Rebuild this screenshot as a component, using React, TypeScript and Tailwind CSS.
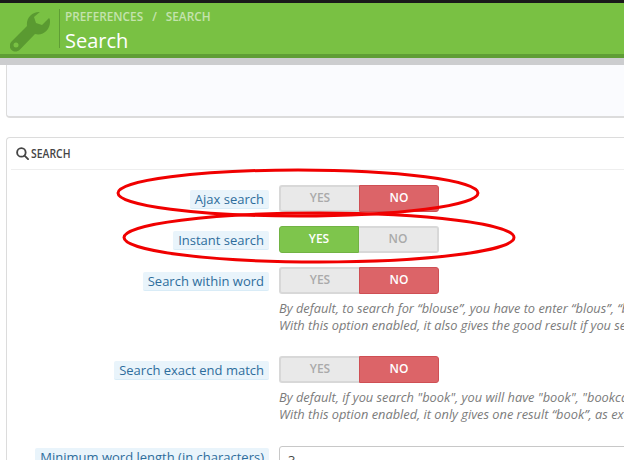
import type { ReactNode } from "react";

const font = { fontFamily: '"Open Sans", "Liberation Sans", sans-serif' };

function Toggle({ value }: { value: "yes" | "no" }) {
  const on = value === "yes";
  return (
    <div className="flex h-[27px] w-[160px] text-[12px] font-semibold">
      <div
        className={
          on
            ? "flex w-[80px] items-center justify-center rounded-l-[3px] border border-[#72b344] bg-[#7ec54c] pb-[2px] text-white"
            : "flex w-[80px] items-center justify-center rounded-l-[3px] border-y-2 border-l-2 border-[#d8d8d8] bg-[#e9e9e9] pb-[2px] text-[#aaaaaa]"
        }
      >
        YES
      </div>
      <div
        className={
          on
            ? "flex w-[80px] items-center justify-center rounded-r-[3px] border-y-2 border-r-2 border-[#d8d8d8] bg-[#e9e9e9] pb-[2px] text-[#aaaaaa]"
            : "flex w-[80px] items-center justify-center rounded-r-[3px] border border-[#cf4f54] bg-[#dc6468] pb-[2px] text-white"
        }
      >
        NO
      </div>
    </div>
  );
}

function Label({ children }: { children: ReactNode }) {
  return (
    <div className="mt-[2px] flex w-[259px] shrink-0 justify-end">
      <span className="whitespace-nowrap rounded-[2px] border-b border-[#d9ecf7] bg-[#e9f4fb] px-[5px] text-[13px] leading-[18px] text-[#2e6d9c]">
        {children}
      </span>
    </div>
  );
}

function Row({
  label,
  value,
  help,
  className,
}: {
  label: string;
  value: "yes" | "no";
  help?: string[];
  className: string;
}) {
  return (
    <div className={className}>
      <div className="flex items-center gap-[10px]">
        <Label>{label}</Label>
        <Toggle value={value} />
      </div>
      {help ? (
        <div className="ml-[269px] mt-[6px] whitespace-nowrap text-[12.8px] italic leading-[17px] text-[#7b7b7b]">
          {help.map((line) => (
            <p key={line}>{line}</p>
          ))}
        </div>
      ) : null}
    </div>
  );
}

export default function App() {
  return (
    <div className="relative h-[460px] w-[624px] overflow-hidden bg-white" style={font}>
      <div className="h-[3px] bg-[#1a1a1a]" />
      <header className="flex h-[55px] border-b-[4px] border-[#5f9e35] bg-[#79c143]">
        <div className="flex w-[59px] shrink-0 items-center justify-end pr-[9px] pt-[6px]">
          <svg viewBox="0 0 40 40" className="h-[40px] w-[40px]" fill="#5a9a31">
            <path d="M29 0C22 0 16 6 17 14L2 29c-3 3-3 6-1 8.500s6 3 9 0L25 22c8 2 15-4 15-12 0-1.500 0-3-1-4l-7 7-6-2-2-6 7-6c-.5 0-1.500 1-2 1z" />
            <circle cx="6" cy="33" r="2.500" fill="#79c143" />
          </svg>
        </div>
        <div className="my-[6px] w-px bg-[#5f9e35]" />
        <div className="pl-[5px] pt-[3px]">
          <div className="flex text-[11.800px] font-semibold leading-[20px] text-[#c4e3ad]">
            <span>PREFERENCES</span>
            <span className="mx-[9px]">/</span>
            <span>SEARCH</span>
          </div>
          <div className="mt-[2px] text-[20px] leading-[26px] text-white">Search</div>
        </div>
      </header>
      <div className="h-[7px] bg-[#cccdcf]" />

      <div className="ml-[6px] h-[53px] rounded-bl-[4px] border-b-[2px] border-l border-[#dcdcdc] bg-[#fafbfe]" />

      <section className="ml-[6px] mt-[19px] h-[330px] rounded-tl-[4px] border-l border-t border-[#dcdcdc] pl-[4px]">
        <div className="flex h-[32px] items-center border-b border-[#eeeeee] pl-[5px] text-[#454545]">
          <svg viewBox="0 0 14 14" className="h-[13px] w-[13px]" fill="none" stroke="#454545" strokeWidth="2">
            <circle cx="5.800" cy="5.800" r="4.600" />
            <path d="M9.200 9.200l3.800 3.800" strokeLinecap="round" />
          </svg>
          <span className="ml-[2px] origin-left scale-x-[.8] text-[13px] font-semibold">SEARCH</span>
        </div>
        <div className="-ml-[1px]">
          <Row className="pt-[15px]" label="Ajax search" value="no" />
          <Row className="pt-[14px]" label="Instant search" value="yes" />
          <Row
            className="pt-[14px]"
            label="Search within word"
            value="no"
            help={[
              "By default, to search for “blouse”, you have to enter “blous”, “blo”, etc.",
              "With this option enabled, it also gives the good result if you search for “lous”.",
            ]}
          />
          <Row
            className="pt-[22px]"
            label="Search exact end match"
            value="no"
            help={[
              'By default, if you search "book", you will have "book", "bookcase" and "bookend".',
              "With this option enabled, it only gives one result “book”, as exact end match.",
            ]}
          />
          <div className="flex items-start gap-[10px] pt-[23px]">
            <Label>Minimum word length (in characters)</Label>
            <div className="h-[30px] w-[400px] shrink-0 rounded-[3px] border border-[#c8c8c8] pl-[8px] text-[13px] leading-[26px] text-[#444444]">
              3
            </div>
          </div>
        </div>
      </section>

      <svg className="pointer-events-none absolute left-0 top-0" width="624" height="460" fill="none" stroke="#f00000" strokeWidth="3">
        <ellipse cx="298" cy="193" rx="180" ry="23" />
        <ellipse cx="319" cy="237.500" rx="195" ry="24.500" />
      </svg>
    </div>
  );
}
